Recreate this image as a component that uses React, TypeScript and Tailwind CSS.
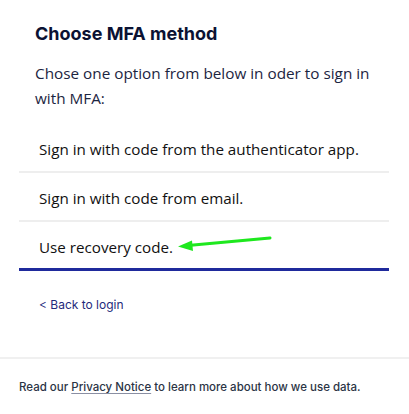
import React from "react";

const seg = { fontFamily: '"Open Sans", "Noto Sans", sans-serif' };

export default function App() {
  return (
    <div className="w-[409px] h-[414px] bg-white relative overflow-hidden">
      <div className="pl-[19px] pr-[20px]">
        <h1
          className="pl-[16px] pt-[22px] text-[18px] leading-[24px] font-bold text-[#0b1233]"
          style={{ fontFamily: 'Inter, sans-serif' }}
        >
          Choose MFA method
        </h1>
        <p
          className="pl-[16px] pt-[15px] text-[15.3px] leading-[25px] text-[#1c2541]"
          style={seg}
        >
          Chose one option from below in oder to sign in with MFA:
        </p>
        <ul className="mt-[13px] text-[15.2px] text-[#111111]" style={seg}>
          <li className="h-[49px] border-b-2 border-[#eeeeee] pl-[20px] flex items-center pt-[3px]">
            Sign in with code from the authenticator app.
          </li>
          <li className="h-[49px] border-b-2 border-[#eeeeee] pl-[20px] flex items-center pt-[3px]">
            Sign in with code from email.
          </li>
          <li className="h-[46px] pl-[20px] flex items-center pt-[4px] relative">
            Use recovery code.
          </li>
        </ul>
        <div className="h-[3px] bg-[#1f2a9c]" />
        <a
          className="block pl-[20px] pt-[26px] text-[12px] leading-[16px] text-[#1f2a7c]"
          style={{ fontFamily: 'Inter, sans-serif' }}
        >
          &lt; Back to login
        </a>
      </div>
      <div className="absolute left-0 top-[357px] w-full border-t-2 border-[#f0f0f0]">
        <p
          className="pl-[19px] pt-[20px] text-[11.5px] leading-[16px] font-medium text-[#2b3445]"
          style={{ fontFamily: 'Inter, sans-serif' }}
        >
          Read our{" "}
          <span className="underline decoration-[#8a8fa3] underline-offset-2">Privacy Notice</span> to learn more about how
          we use data.
        </p>
      </div>
      <svg className="absolute left-0 top-0 pointer-events-none" width="409" height="414">
        <line x1="270" y1="238" x2="188" y2="245.5" stroke="#1ee81e" strokeWidth="3" strokeLinecap="round" />
        <polygon points="178,246.5 192,240.5 193,251" fill="#1ee81e" />
      </svg>
    </div>
  );
}
